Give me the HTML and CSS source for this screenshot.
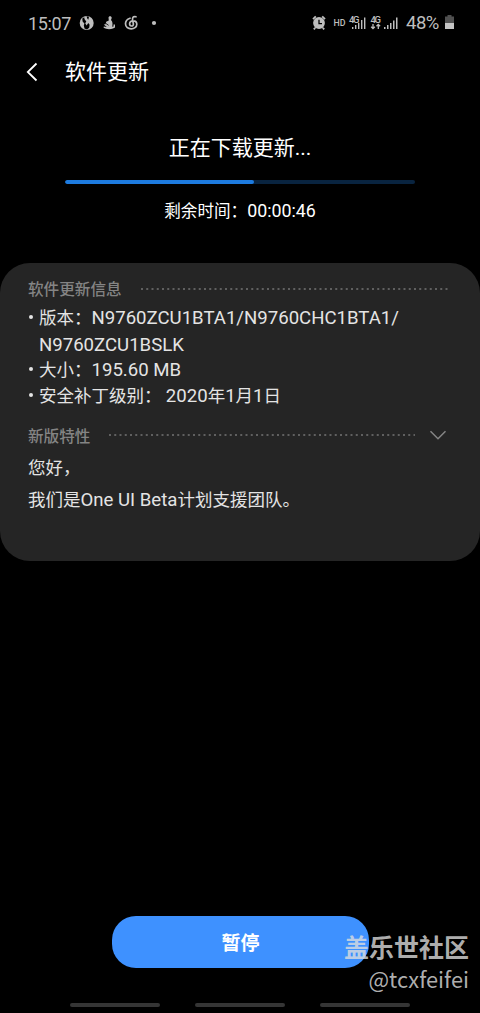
FILE: index.html
```html
<!DOCTYPE html>
<html lang="zh-CN">
<head>
<meta charset="utf-8">
<title>软件更新</title>
<link rel="stylesheet" href="styles.css">
</head>
<body>
<div class="screen">
  <div class="status">
    <span class="clock">15:07</span>
    <svg class="notices" width="80" height="18" viewBox="0 0 80 18" fill="none" stroke="#bebebe">
      <circle cx="7.700" cy="9" r="7" fill="#bebebe" stroke="none"/>
      <path d="M3.300 4.500L5.200 3.200L5.600 5.200L7.300 7.500L6.200 9.200L7.600 11.500L9.300 9L10.600 10.800L10.200 13.800L8 15.500L5.500 14.500L4.800 11.500L5.400 9.500L3.600 7.500ZM7.500 2.200L10 2.800L9.300 5.800L8.400 4.800Z" fill="#000" stroke="none"/>
      <path d="M29.500 3.500C30 1.500 32.800 1.800 32.700 4L32 6C34 8 33.600 10.500 33.200 12.800L34.500 12.500V10.500H36V13.500L34 14.600C31 15.600 27 15.400 24.600 13.800L24.800 12.600L27.800 13L24.800 10.500L26.500 10.200L27.200 7.800L29.800 6.500Z" fill="#bebebe" stroke="none"/>
      <path d="M26.500 9.200L29.600 11.300" stroke="#000" stroke-width=".8"/>
      <path d="M57 2.800C54 1.800 53.200 4 53.600 6.200L54.400 10C54.500 12.800 50.600 12.600 50.600 9.800C50.600 5.800 57.800 5.800 57.800 10.200C57.800 16.400 46.500 16.400 46.500 9.800C46.500 6.800 48.500 5 51 4.200" stroke-width="1.700" stroke-linecap="round"/>
      <circle cx="75" cy="9" r="2.100" fill="#bebebe" stroke="none"/>
    </svg>
    <span class="space"></span>
    <svg class="signals" width="90" height="18" viewBox="0 0 90 18" fill="#bebebe">
      <circle cx="7" cy="9" r="5.900"/>
      <path d="M1 5.200L3.800 2.400M13 5.200L10.200 2.400M3.200 13.800L1.800 15.400M10.800 13.800L12.200 15.400" stroke="#bebebe" stroke-width="1.800"/>
      <path d="M7 5.700V9.700H10" fill="none" stroke="#000" stroke-width="1.300"/>
      <text x="21.500" y="12" class="hd" textLength="12" lengthAdjust="spacingAndGlyphs">HD</text>
      <text x="37" y="8.800" class="net" textLength="10.500">4G</text>
      <path d="M40 13h1.400v2H40zM43 11h1.400v4H43zM46 9h1.400v6H46zM49 6h1.400v9H49zM52 3.500h1.400V15H52z"/>
      <text x="58.500" y="8.800" class="net" textLength="10.500">4G</text>
      <path d="M61 10V14.500M59.200 12.700L61 14.600L62.800 12.700M66.300 15V10.500M64.500 12.300L66.300 10.400L68.100 12.300" fill="none" stroke="#bebebe" stroke-width="1.300"/>
      <path d="M72 13h1.500v2H72zM75 11h1.500v4H75zM78 9h1.500v6H78zM81 6.500h1.500V15H81zM84 3.500h1.500V15H84z"/>
    </svg>
    <span class="percent">48%</span>
    <svg class="battery" width="9" height="14" viewBox="0 0 9 14"><path d="M2.500 0h4v1.500H9V8H0V1.500h2.500z" fill="#505050"/><path d="M0 8h9v6H0z" fill="#c4c4c4"/></svg>
  </div>
  <div class="header">
    <svg class="back" width="12" height="20" viewBox="0 0 12 20"><path d="M10.500 1.500L1.800 10L10.500 18.500" fill="none" stroke="#fff" stroke-width="1.800"/></svg>
    <span class="title">软件更新</span>
  </div>
  <div class="download">
    <div class="state">正在下载更新...</div>
    <div class="track"><div class="done" style="width:54%"></div></div>
    <div class="remain">剩余时间：<span class="time">00:00:46</span></div>
  </div>
  <div class="card">
    <div class="section"><span>软件更新信息</span><svg class="dots" height="2"><line x1="0" y1="1" x2="308" y2="1"/></svg></div>
    <ul class="facts">
      <li class="version">版本：<span class="latin">N9760ZCU1BTA1/N9760CHC1BTA1/<br>N9760ZCU1BSLK</span></li>
      <li>大小：<span class="latin">195.60 MB</span></li>
      <li>安全补丁级别： <span class="latin">2020</span>年<span class="latin">1</span>月<span class="latin">1</span>日</li>
    </ul>
    <div class="section features"><span>新版特性</span><svg class="dots" height="2"><line x1="0" y1="1" x2="306" y2="1"/></svg><svg class="chevron" width="18" height="11" viewBox="0 0 18 11"><path d="M1.500 1.200L9 8.800L16.500 1.200" fill="none" stroke="#858585" stroke-width="1.500"/></svg></div>
    <div class="note">您好，</div>
    <div class="note">我们是<span class="latin">One UI Beta</span>计划支援团队。</div>
  </div>
  <div class="pause">暂停</div>
  <div class="nav"><i></i><i></i><i></i></div>
  <div class="watermark"><div class="forum">盖乐世社区</div><div class="user">@tcxfeifei</div></div>
</div>
</body>
</html>
```
FILE: styles.css
```css
body {
  margin: 0;
  background: #000;
  font-family: Roboto, "Noto Sans CJK SC", sans-serif;
  color: #fff;
}
.screen {
  position: relative;
  width: 480px;
  height: 1013px;
  overflow: hidden;
  background: #000;
  display: flex;
  flex-direction: column;
  white-space: nowrap;
}
.status {
  height: 46px;
  box-sizing: border-box;
  padding: 0 26px 0 28px;
  display: flex;
  align-items: center;
  color: #bebebe;
  font-size: 18px;
}
.clock { width: 51px; letter-spacing: -.35px; }
.space { flex: 1; }
.signals { margin-right: 4px; }
.percent { width: 39px; letter-spacing: -.5px; font-size: 18.5px; }
.battery { margin-top: -2px; }
.hd { font-size: 9px; font-weight: 500; }
.net { font-size: 9.5px; font-weight: 500; }
.header {
  height: 52px;
  display: flex;
  align-items: center;
  padding-left: 26px;
}
.back { margin-top: -1px; }
.title { margin-left: 27px; font-size: 21px; line-height: 30px; }
.download {
  height: 165px;
  display: flex;
  flex-direction: column;
  align-items: center;
}
.state { margin-top: 35px; font-size: 21px; line-height: 30px; }
.track {
  width: 350px;
  height: 4px;
  margin-top: 17px;
  border-radius: 2px;
  background: #092440;
  overflow: hidden;
}
.done { height: 4px; border-radius: 2px; background: #1d7be0; }
.remain { margin-top: 15px; font-size: 16.6px; line-height: 24px; }
.time { font-size: 17.8px; }
.card {
  height: 298px;
  box-sizing: border-box;
  padding: 14px 32px 0 28px;
  border-radius: 30px;
  background: #252525;
  color: #e4e4e4;
  font-size: 17.5px;
}
.section {
  height: 24px;
  display: flex;
  align-items: center;
  gap: 19px;
  color: #848484;
  font-size: 15.6px;
  line-height: 24px;
  font-weight: 500;
}
.section span { padding-top: 2px; }
.dots { flex: 1; min-width: 0; }
.dots line { stroke: #606060; stroke-width: 2; stroke-dasharray: 2 3.25; }
.facts { list-style: none; margin: 4px 0 0; padding: 0 0 0 11px; }
.facts li { position: relative; line-height: 26px; height: 26px; }
.facts li::before {
  content: "";
  position: absolute;
  left: -10px;
  top: 10px;
  width: 4px;
  height: 4px;
  border-radius: 50%;
  background: #e4e4e4;
}
.facts .version { height: 52px; line-height: 27px; }
.latin { font-size: 18.6px; }
.features { margin-top: 14px; }
.features span { padding-top: 3px; }
.features .chevron { margin-left: -8px; margin-right: 1px; }
.note { line-height: 32px; height: 32px; }
.features + .note { margin-top: 5px; }
.pause {
  width: 257px;
  height: 52px;
  box-sizing: border-box;
  padding-top: 3px;
  margin: 355px 0 0 112px;
  border-radius: 24px;
  background: #3e91ff;
  text-align: center;
  font-size: 19px;
  line-height: 50px;
  font-weight: 700;
}
.nav { display: flex; justify-content: center; gap: 35px; margin-top: 35px; }
.nav i { width: 90px; height: 4px; border-radius: 2px; background: #353535; }
.watermark {
  position: absolute;
  right: 11px;
  bottom: 19px;
  text-align: right;
  color: rgba(222, 222, 222, .8);
  font-family: "Noto Sans CJK SC", sans-serif;
}
.forum { font-size: 25px; line-height: 34px; font-weight: 700; }
.user { font-size: 21.8px; line-height: 31px; }
```
